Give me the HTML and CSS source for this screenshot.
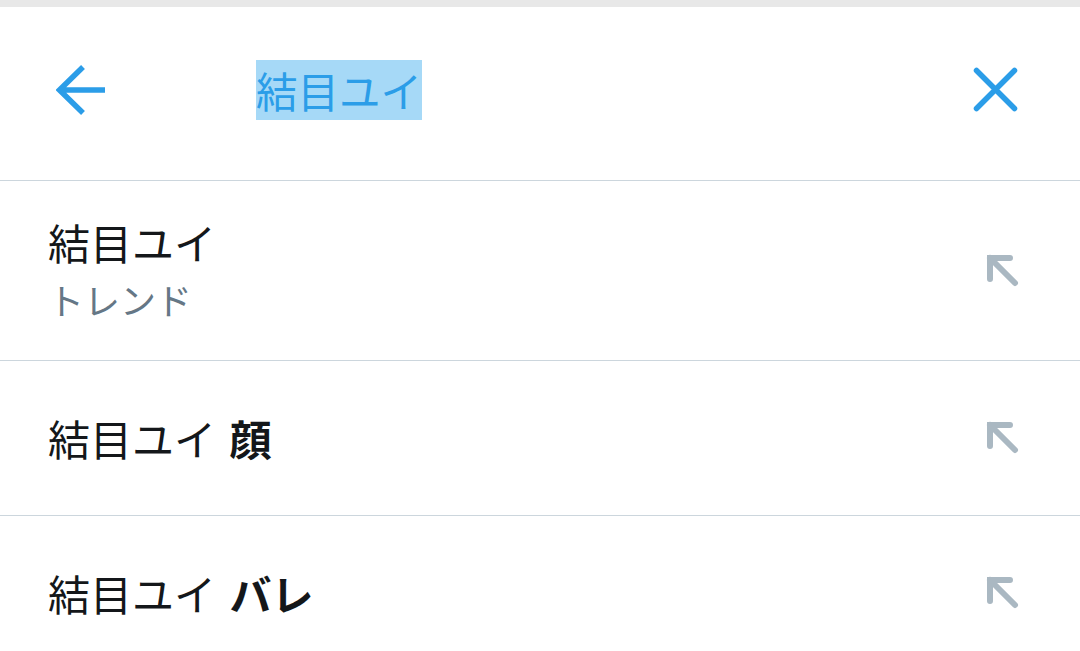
FILE: index.html
```html
<!DOCTYPE html>
<html lang="ja">
<head>
    <meta charset="UTF-8">
    <meta name="viewport" content="width=device-width, initial-scale=1.0">
    <title>検索</title>
    <link rel="stylesheet" href="styles.css">
</head>
<body>
    <div class="status-strip"></div>

    <div class="search-bar">
        <svg class="back-icon" width="52" height="52" viewBox="0 0 52 52">
            <path d="M3 26 H49 M27 3 L3.5 26 L27 49" fill="none" stroke="#2b9de8" stroke-width="5.5"/>
        </svg>
        <span class="query">結目ユイ</span>
        <svg class="close-icon" width="52" height="52" viewBox="0 0 52 52">
            <path d="M6.5 6.5 L44.5 44.5 M44.5 6.5 L6.5 44.5" fill="none" stroke="#2b9de8" stroke-width="5.5" stroke-linecap="round"/>
        </svg>
    </div>

    <ul class="suggestions">
        <li class="suggestion tall">
            <div class="text">
                <span class="main">結目ユイ</span>
                <span class="sub">トレンド</span>
            </div>
            <svg class="fill-icon" width="40" height="40" viewBox="0 0 40 40">
                <path d="M6 28 V7 H26 M6 7 L31 32" fill="none" stroke="#aab8c2" stroke-width="6" stroke-linecap="round"/>
            </svg>
        </li>
        <li class="suggestion">
            <div class="text">
                <span class="main">結目ユイ <b>顔</b></span>
            </div>
            <svg class="fill-icon" width="40" height="40" viewBox="0 0 40 40">
                <path d="M6 28 V7 H26 M6 7 L31 32" fill="none" stroke="#aab8c2" stroke-width="6" stroke-linecap="round"/>
            </svg>
        </li>
        <li class="suggestion">
            <div class="text">
                <span class="main">結目ユイ <b>バレ</b></span>
            </div>
            <svg class="fill-icon" width="40" height="40" viewBox="0 0 40 40">
                <path d="M6 28 V7 H26 M6 7 L31 32" fill="none" stroke="#aab8c2" stroke-width="6" stroke-linecap="round"/>
            </svg>
        </li>
    </ul>
</body>
</html>
```
FILE: styles.css
```css
body {
    font-family: "Noto Sans CJK JP", "Noto Sans", sans-serif;
    background-color: #ffffff;
    color: #14171a;
    margin: 0;
    padding: 0;
    overflow: hidden;
}

.status-strip {
    height: 7px;
    background-color: #e8e8e8;
}

.search-bar {
    display: flex;
    align-items: center;
    height: 166px;
    padding: 0 58px 7px 56px;
    border-bottom: 1px solid #ccd6dd;
}
.back-icon {
    flex: none;
}
.query {
    margin-left: 148px;
    font-size: 41.5px;
    line-height: 60px;
    color: #2b9de8;
    background-color: #a6d9f7;
}
.close-icon {
    flex: none;
    margin-left: auto;
}

.suggestions {
    list-style: none;
    margin: 0;
    padding: 0;
}
.suggestion {
    display: flex;
    align-items: center;
    height: 154px;
    padding: 0 56px 0 48px;
    border-bottom: 1px solid #ccd6dd;
}
.suggestion.tall {
    height: 179px;
}
.text {
    display: flex;
    flex-direction: column;
}
.main {
    font-size: 42px;
    line-height: 56px;
}
.main b {
    font-weight: 700;
    margin-left: 4px;
}
.sub {
    font-size: 36px;
    line-height: 58px;
    color: #657786;
}
.fill-icon {
    flex: none;
    margin-left: auto;
}
```
